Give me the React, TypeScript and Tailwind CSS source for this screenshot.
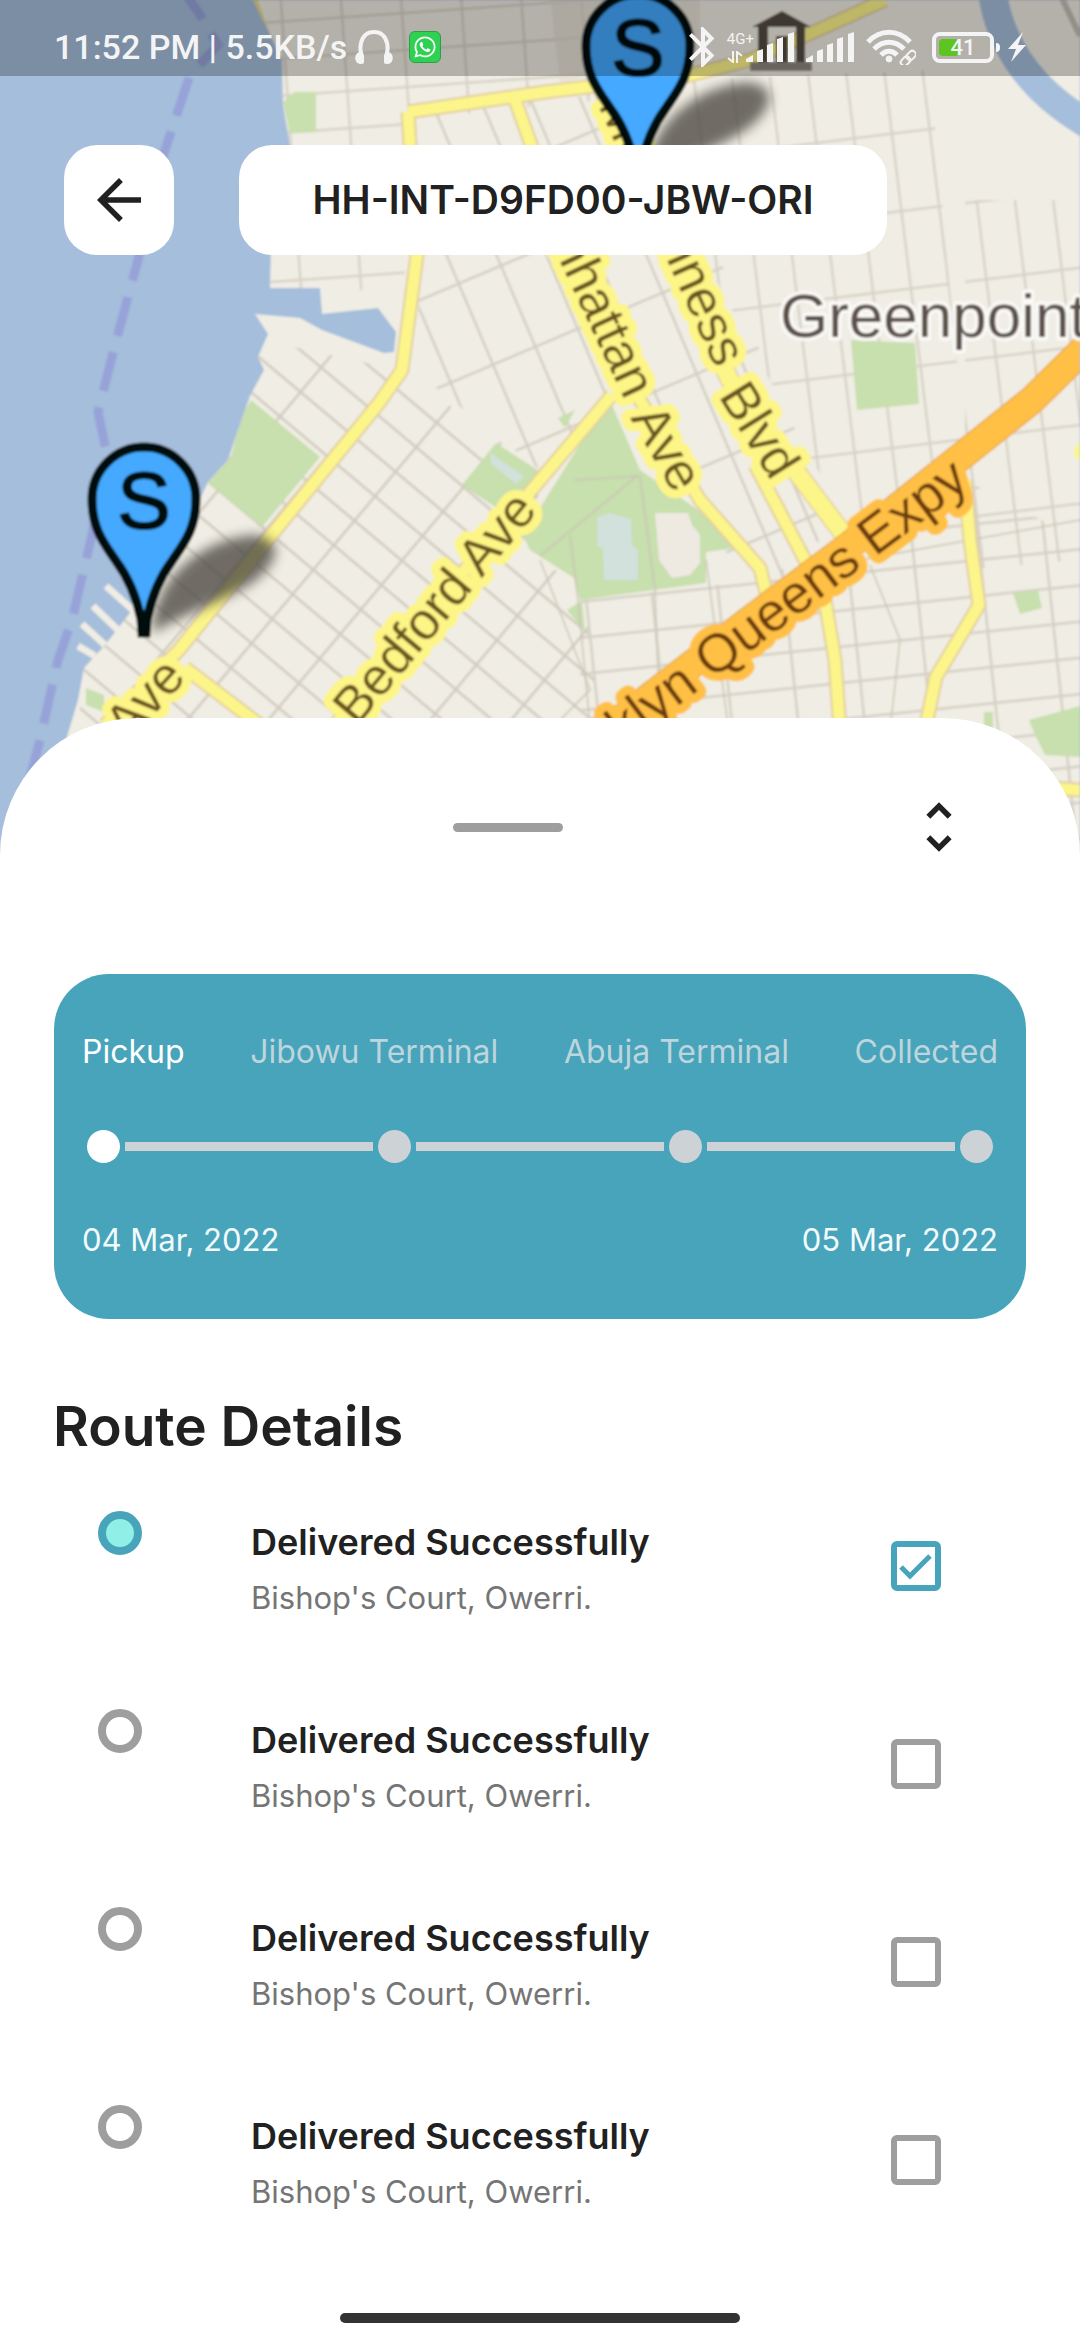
import React, { useState } from "react";
import { MdArrowBack, MdBluetooth, MdUnfoldMore } from "react-icons/md";
import { FaWhatsapp } from "react-icons/fa";

const land =
  "M253 0 L268 30 L282 60 L283 105 L290 145 L272 200 L270 288 L320 288 L322 314 L378 308 L396 332 L394 352 L384 353 L322 330 L300 318 L255 314 L268 334 L258 357 L264 370 L250 396 L236 436 L228 460 L208 482 L190 520 L140 600 L105 645 L84 668 L78 700 L60 760 L40 800 L0 870 L1080 870 L1080 0Z";

const parks = [
  "M283 102 L295 92 L316 92 L316 132 L290 133Z",
  "M251 400 L320 457 L262 527 L207 482 L231 457 L241 417Z",
  "M496 443 L545 475 L515 520 L462 485Z",
  "M523 535 L609 398 L640 470 L720 525 L735 548 L706 552 L706 583 L580 600 L574 578 L530 550Z",
  "M558 418 L575 410 L565 428Z",
  "M851 340 L915 343 L919 404 L857 410Z",
  "M1013 593 L1038 590 L1042 608 L1020 614Z",
  "M567 610 L582 601 L585 632Z",
  "M1029 720 L1080 706 L1080 757 L1045 755 L1035 735Z",
  "M984 712 L993 712 L993 730 L984 727Z",
  "M86 688 L104 695 L104 712 L86 705Z",
];

const roads = [
  "M408 112 L545 92 L690 75 L750 60 L825 27 L885 0",
  "M408 112 L410 145 L417 255 L402 370 L379 403 L265 543 L179 650 L105 725",
  "M185 668 L260 725",
  "M515 100 L533 150 L565 240 L640 400 L700 500 L760 568 L768 600",
  "M755 465 L805 560 L825 600 L835 660 L840 730",
  "M612 395 L530 492 L335 725",
  "M965 480 L970 540 L979 605 L936 677 L925 730",
  "M1050 788 L1080 790",
];

const minor = [
  "M575 480 L640 476 L655 590",
  "M540 556 L637 476",
  "M570 535 L578 600 L600 830",
  "M540 560 L590 690 L560 720",
  "M655 590 L660 730",
  "M706 560 L730 740",
  "M860 560 L1080 520",
  "M870 565 L900 640 L890 730",
];

function Pin({ x, y }: { x: number; y: number }) {
  return (
    <g transform={`translate(${x} ${y})`}>
      <path
        d="M8 134 C10 80 54 42 108 36 C140 38 138 62 108 84 C76 104 38 116 8 134Z"
        fill="#4b4843"
        opacity="0.78"
        filter="url(#shade)"
      />
      <path
        d="M-2 134 L-3 120 C-8 96 -16 78 -28 62 C-40 44 -52 30 -52 0 A52 52 0 0 1 52 0 C52 30 40 44 28 62 C16 78 8 96 3 120 L2 134Z"
        fill="#44a9ff"
        stroke="#05080b"
        strokeWidth="9"
      />
      <path d="M-6 112 H6 V138 H-6Z" fill="#05080b" />
      <text
        x="0"
        y="29"
        textAnchor="middle"
        fontSize="80"
        fill="#05080b"
        stroke="#05080b"
        strokeWidth="2"
      >
        S
      </text>
    </g>
  );
}

function StreetMap() {
  return (
    <svg
      className="absolute inset-x-0 top-0 h-[870px] w-full font-['Liberation_Sans',Arial,sans-serif]"
      viewBox="0 0 1080 870"
      preserveAspectRatio="xMidYMin slice"
      role="img"
      aria-label="Map of the delivery route"
    >
      <defs>
        <filter id="shade" x="-30%" y="-30%" width="160%" height="160%">
          <feGaussianBlur stdDeviation="6" />
        </filter>
        <filter id="soft" x="0" y="0" width="100%" height="100%">
          <feGaussianBlur stdDeviation="1" />
        </filter>
        <clipPath id="land">
          <path d={land} />
        </clipPath>
        <pattern id="southWest" width="62" height="32" patternUnits="userSpaceOnUse" patternTransform="translate(272 617) rotate(40)">
          <path d="M1 0 V32 M0 1 H62" stroke="#d1cbc0" strokeWidth="3" fill="none" />
        </pattern>
        <pattern id="middle" width="46" height="88" patternUnits="userSpaceOnUse" patternTransform="translate(457 283) rotate(-23)">
          <path d="M1 0 V88 M0 1 H46" stroke="#d4cfc4" strokeWidth="3" fill="none" />
        </pattern>
        <pattern id="east" width="38" height="78" patternUnits="userSpaceOnUse" patternTransform="translate(900 210) rotate(-7)">
          <path d="M1 0 V78 M0 1 H38" stroke="#d8d3c8" strokeWidth="3" fill="none" />
        </pattern>
        <pattern id="south" width="66" height="36" patternUnits="userSpaceOnUse" patternTransform="translate(585 600) rotate(-6)">
          <path d="M1 0 V36 M0 1 H66" stroke="#d5d0c5" strokeWidth="3" fill="none" />
        </pattern>
        <pattern id="north" width="60" height="37" patternUnits="userSpaceOnUse" patternTransform="translate(346 90) rotate(-4)">
          <path d="M1 0 V37 M0 1 H60" stroke="#d8d3c8" strokeWidth="3" fill="none" />
        </pattern>
      </defs>

      <g filter="url(#soft)">
        <path d="M-10 -10 H1090 V880 H-10Z" fill="#a5bedb" />
        <path d={land} fill="#f0ede4" />
        <path d="M180 -14 L198 12 L218 45 L190 75 L165 150 L138 260 L115 345 L98 412 L107 455 L92 535 L72 620 L58 660 L40 740 L0 890" fill="none" stroke="#97a3d8" strokeWidth="9" strokeDasharray="40 17" />
        <g stroke="#f0ede4" strokeWidth="7">
          <path d="M106 586 L135 612 M93 606 L118 630 M82 624 L105 645 M78 646 L95 656" />
        </g>

        <g clipPath="url(#land)">
          <path d="M230 0 H600 V100 L405 120 V290 H230Z" fill="url(#north)" />
          <path d="M415 110 L600 95 L720 260 L800 440 L840 520 L760 600 L610 390 L540 470 L420 375Z" fill="url(#middle)" />
          <path d="M215 330 L400 370 L540 470 L535 550 L585 600 L600 720 L80 870 L80 650Z" fill="url(#southWest)" />
          <path d="M690 80 L930 70 L965 450 L850 530 L700 250Z M965 200 H1080 V560 L965 570Z" fill="url(#east)" />
          <path d="M580 600 L760 580 L965 480 L1080 540 V870 H580Z" fill="url(#south)" />
          <path d="M550 0 H700 V60 L560 82Z" fill="#e2ddd0" opacity="0.7" />
          <path d="M1080 -10 L1058 -10 L1080 36" fill="none" stroke="#c5bfb4" strokeWidth="6" />
          {parks.map((d) => (
            <path key={d} d={d} fill="#c8dfae" />
          ))}
          <path d="M597 517 L610 513 L631 519 L632 545 L638 550 L638 580 L604 580 L603 550 L597 545Z" fill="#d3e1dc" />
          <path d="M490 453 L524 476 L516 484 L491 464Z" fill="#d3e1dc" />
          <path d="M655 513 L688 513 L692 525 L700 535 L700 563 L690 575 L672 578 L659 560Z" fill="#eeeae2" />
          {minor.map((d) => (
            <path key={d} d={d} fill="none" stroke="#c9c6b4" strokeWidth="2" opacity="0.75" />
          ))}
          <path d="M992 -10 C1000 50 1035 95 1095 128" fill="none" stroke="#a5bedb" strokeWidth="29" />
          <g fill="none" strokeLinejoin="round">
            <path d="M253 -5 L268 36" stroke="#e6d77c" strokeWidth="5" />
            {roads.map((d) => (
              <path key={d} d={d} stroke="#e3cf9f" strokeWidth="15" />
            ))}
            <path d="M600 80 L640 190 L690 300 L740 400 L795 470 L848 540" stroke="#e3cf9f" strokeWidth="20" />
            {roads.map((d) => (
              <path key={d} d={d} stroke="#fcf58a" strokeWidth="11" />
            ))}
            <path d="M600 80 L640 190 L690 300 L740 400 L795 470 L848 540" stroke="#fcf58a" strokeWidth="17" />
            <circle cx="1084" cy="452" r="10" fill="#fcf58a" stroke="none" />
            <path d="M1095 338 L1032 400 L963 455 L850 545 L747 622 L600 735" stroke="#e8a94a" strokeWidth="29" />
            <path d="M1095 338 L1032 400 L963 455 L850 545 L747 622 L600 735" stroke="#ffc044" strokeWidth="26" />
          </g>
        </g>

        <g fill="#544b42">
          <path d="M752 27 L782 11 L811 27Z M758 27 H768 V62 H758Z M776 36 H788 V62 H776Z M796 27 H805 V62 H796Z" />
          <path d="M750 62 H812 V71 H750Z" fill="#8d877e" />
        </g>

        <g strokeLinejoin="round">
          <text x="780" y="337" fontSize="62" fill="#5b5148" stroke="#fbfaf7" strokeWidth="7" paintOrder="stroke">
            Greenpoint
          </text>
          <g fontSize="52" fill="#6b531e" stroke="#fdf586" strokeWidth="18">
            <text transform="translate(357 727) rotate(-50)" paintOrder="stroke">Bedford Ave</text>
            <text transform="translate(128 744) rotate(-48)" paintOrder="stroke">Ave</text>
            <text transform="translate(521 178) rotate(65)" paintOrder="stroke">Manhattan</text>
            <text transform="translate(630 418) rotate(60)" paintOrder="stroke">Ave</text>
            <text transform="translate(598 105) rotate(66)" paintOrder="stroke">McGuinness</text>
            <text transform="translate(718 396) rotate(58)" paintOrder="stroke">Blvd</text>
          </g>
          <text transform="translate(971 485) rotate(-37)" textAnchor="end" fontSize="54" fill="#6b3a10" stroke="#ffc044" strokeWidth="18" paintOrder="stroke">
            Brooklyn Queens Expy
          </text>
        </g>

        <Pin x={144} y={499} />
        <Pin x={638} y={46} />
      </g>
    </svg>
  );
}

function Headphones() {
  return (
    <svg viewBox="0 0 38 36" className="h-9 w-[38px]" fill="none" aria-hidden="true">
      <path d="M7 33 V27 C5 22 5 18 6 14 C8 6 13 3 19 3 C25 3 30 6 32 14 C33 18 33 22 31 27 V33" stroke="#f4f4f4" strokeWidth="4" strokeLinecap="round" />
      <path d="M5 24 C0 25 0 33 5 34Z M33 24 C38 25 38 33 33 34Z" fill="#f4f4f4" stroke="#f4f4f4" strokeWidth="2" />
    </svg>
  );
}

function Bars() {
  return (
    <svg viewBox="0 0 48 32" className="h-8 w-12" fill="#f4f4f4" aria-hidden="true">
      <path d="M0 31 V28 L7 24 V31Z M11 31 V20 L17 18 V31Z M21 31 V14 L27 12 V31Z M31 31 V8 L37 6 V31Z M42 31 V3 L48 1 V31Z" />
    </svg>
  );
}

function Wifi() {
  return (
    <svg viewBox="0 0 50 36" className="h-9 w-[50px]" fill="none" stroke="#f4f4f4" aria-hidden="true">
      <path d="M2 13 C14 0 32 0 44 13" strokeWidth="5" />
      <path d="M8 20 C17 11 29 11 38 20" strokeWidth="5" />
      <path d="M15 26 C20 21 26 21 31 26" strokeWidth="5" />
      <circle cx="23" cy="30" r="3" fill="#f4f4f4" strokeWidth="1" />
      <g strokeWidth="2" transform="rotate(-45 42 29)">
        <rect x="33" y="26" width="10" height="7" rx="3" />
        <rect x="41" y="26" width="10" height="7" rx="3" />
      </g>
    </svg>
  );
}

function StatusBar() {
  return (
    <div className="relative flex h-[76px] items-center justify-between bg-black/25 pt-[18px] pr-[54px] pl-[54px] font-['Roboto',sans-serif] text-[#f4f4f4]">
      <div className="flex items-center">
        <span className="text-[34px] leading-10 font-medium">11:52 PM | 5.5KB/s</span>
        <span className="ml-2">
          <Headphones />
        </span>
        <span className="ml-4 grid size-8 place-items-center rounded-md border border-[#2f9d45] bg-[#2fd152]">
          <FaWhatsapp className="size-6 text-white" />
        </span>
      </div>
      <div className="flex items-center">
        <MdBluetooth className="size-12" />
        <div className="flex flex-col text-[15px] leading-4">
          <span>4G+</span>
          <svg viewBox="0 0 16 12" className="mt-1 h-3 w-4" fill="none" stroke="#f4f4f4" strokeWidth="2" aria-hidden="true">
            <path d="M1 7 L6 11 V0 M15 5 L10 1 V12" />
          </svg>
        </div>
        <span className="-ml-2">
          <Bars />
        </span>
        <span className="ml-3">
          <Bars />
        </span>
        <span className="ml-3">
          <Wifi />
        </span>
        <div className="ml-4 flex items-center">
          <div className="relative grid h-[31px] w-[62px] place-items-center rounded-lg border-4 border-[#f4f4f4]">
            <span className="absolute inset-y-[3px] left-[3px] w-5 rounded-sm bg-[#5ec420]" />
            <span className="relative text-[22px] leading-6 font-medium">41</span>
          </div>
          <span className="ml-0.5 h-[9px] w-1 rounded-r-sm bg-[#f4f4f4]" />
        </div>
        <svg viewBox="0 0 18 30" className="ml-2 h-[30px] w-[18px]" fill="#f4f4f4" aria-hidden="true">
          <path d="M15 0 L0 17 H8 L3 30 L18 13 H10Z" />
        </svg>
      </div>
    </div>
  );
}

const stops = ["Pickup", "Jibowu Terminal", "Abuja Terminal", "Collected"];

function Progress() {
  return (
    <section className="mx-[54px] mt-[57px] rounded-[55px] bg-[#47a4bb] px-7 pt-[55px] pb-[57px] leading-[45px] text-[#f3fafb]">
      <div className="flex justify-between text-[32px] text-[#bdd5dc]">
        {stops.map((stop, i) => (
          <span key={stop} className={i === 0 ? "text-white" : ""}>
            {stop}
          </span>
        ))}
      </div>
      <div className="mt-14 flex items-center gap-[5px] px-[5px]">
        {stops.map((stop, i) => (
          <React.Fragment key={stop}>
            {i > 0 && <span className="h-[9px] flex-1 bg-[#ccd2d5]" />}
            <span className={i === 0 ? "size-[33px] rounded-full bg-white" : "size-[33px] rounded-full bg-[#ccd2d5]"} />
          </React.Fragment>
        ))}
      </div>
      <div className="mt-[54px] flex justify-between text-[31px]">
        <span>04 Mar, 2022</span>
        <span>05 Mar, 2022</span>
      </div>
    </section>
  );
}

function RouteRow({ index, initial }: { index: number; initial: boolean }) {
  const [done, setDone] = useState(initial);
  const id = `route-${index}`;
  return (
    <li className="flex h-[198px] items-start pr-[139px] pl-[98px]">
      <span
        className={
          done
            ? "size-11 rounded-full border-8 border-[#47a4bb] bg-[#90f0e8]"
            : "size-11 rounded-full border-8 border-[#9e9e9e]"
        }
      />
      <label htmlFor={id} className="mt-[5px] ml-[109px] flex flex-1 flex-col gap-0.5 leading-[53px]">
        <span className="text-[36px] font-semibold text-[#212121]">Delivered Successfully</span>
        <span className="text-[31px] text-[#757575]">Bishop's Court, Owerri.</span>
      </label>
      <span className="relative mt-[30px] size-[50px]">
        <input
          id={id}
          type="checkbox"
          checked={done}
          onChange={() => setDone(!done)}
          className="block size-full appearance-none rounded-md border-[6px] border-[#9e9e9e] checked:border-[#47a4bb]"
        />
        {done && (
          <svg viewBox="0 0 50 50" className="pointer-events-none absolute inset-0" fill="none" aria-hidden="true">
            <path d="M10 26 L19 35 L39 15" stroke="#47a4bb" strokeWidth="5" />
          </svg>
        )}
      </span>
    </li>
  );
}

export default function App() {
  return (
    <div className="relative flex min-h-screen flex-col overflow-hidden bg-white font-['Inter',sans-serif]">
      <StreetMap />
      <StatusBar />
      <header className="relative mt-[69px] flex gap-[65px] pr-[193px] pl-16">
        <button type="button" aria-label="Back" className="grid size-[110px] shrink-0 place-items-center rounded-[33px] bg-white text-[#212121]">
          <MdArrowBack className="size-[66px]" />
        </button>
        <h1 className="grid h-[110px] flex-1 place-items-center rounded-[33px] bg-white text-[39px] leading-[60px] font-semibold text-[#212121]">
          HH-INT-D9FD00-JBW-ORI
        </h1>
      </header>

      <main className="relative mt-[463px] flex flex-1 flex-col rounded-t-[137px] bg-white">
        <div className="grid grid-cols-[54fr_110px_37fr_132px_9fr] items-center pt-[43px]">
          <span className="col-start-2 h-[9px] rounded-full bg-[#9e9e9e]" />
          <button type="button" aria-label="Expand or collapse" className="col-start-4 grid h-[132px] place-items-center text-[#212121]">
            <MdUnfoldMore className="size-[66px]" />
          </button>
        </div>

        <div className="pt-6">
          <Progress />
        </div>

        <h2 className="mt-[67px] pl-[53px] text-[55px] leading-[80px] font-semibold text-[#212121]">Route Details</h2>
        <ul className="mt-[45px]">
          {[true, false, false, false].map((done, i) => (
            <RouteRow key={i} index={i} initial={done} />
          ))}
        </ul>
        <div className="mt-auto flex justify-center pb-[17px]">
          <span className="h-[10px] w-[400px] rounded-full bg-[#333333]" />
        </div>
      </main>
    </div>
  );
}
